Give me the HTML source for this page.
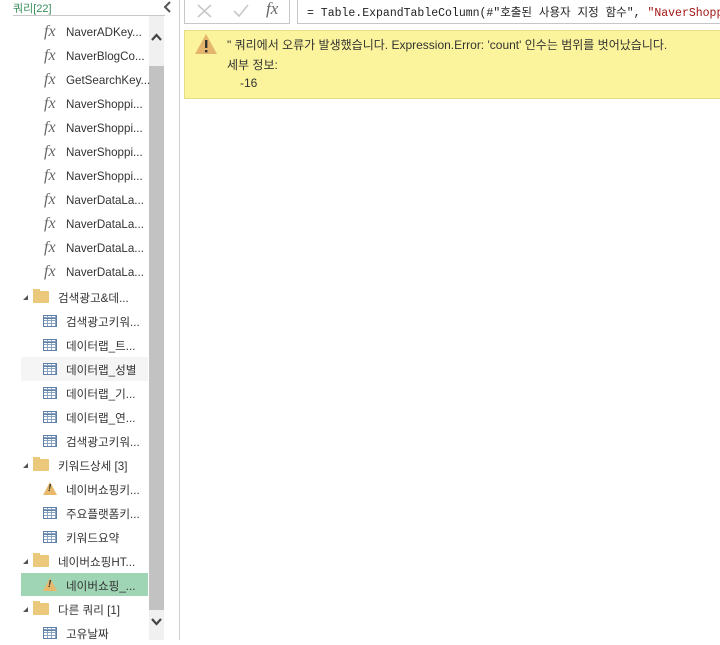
<!DOCTYPE html>
<html><head><meta charset="utf-8"><style>
*{margin:0;padding:0;box-sizing:border-box}
body{width:720px;height:640px;background:#fff;position:relative;overflow:hidden;font-family:"Segoe UI","Liberation Sans","Noto Sans CJK KR",sans-serif;font-size:12px;color:#333}
.a{position:absolute}
.row{position:absolute;left:21px;width:127px;height:24px}
.row span{position:absolute;top:5px;white-space:nowrap;font-size:11.6px;color:#333}
.fx{position:absolute;left:23px;top:2px;font-family:"Liberation Serif",serif;font-style:italic;font-size:16px;color:#666}
.tbl{position:absolute;left:22px;top:6px;width:14px;height:12px;border:1px solid #5e7fa8;background:
linear-gradient(#5e7fa8,#5e7fa8) 0 2px/100% 1px no-repeat,
repeating-linear-gradient(90deg,transparent 0 3px,#8aa3c2 3px 4px),
repeating-linear-gradient(0deg,transparent 0 2px,#8aa3c2 2px 3px);background-color:#fff}
.fold{position:absolute;left:12px;top:6px;width:16px;height:12px;background:#ecc97a;border-radius:1px}
.fold:before{content:"";position:absolute;left:0;top:-2px;width:7px;height:3px;background:#ecc97a}
.tri{position:absolute;left:2px;top:10px;width:0;height:0;border-left:5px solid transparent;border-bottom:5px solid #555}
.warn{position:absolute;left:22px;top:5px;width:0;height:0;border-left:7px solid transparent;border-right:7px solid transparent;border-bottom:13px solid #e8b96a}
.warn:after{content:"!";position:absolute;left:-2px;top:1px;font-size:10px;font-weight:bold;color:#333}
</style></head><body>
<div class="a" style="left:13px;top:0;font-size:11px;color:#3a8f5c">쿼리[22]</div>
<div class="a" style="left:13px;top:15px;width:152px;height:1px;background:#c8c8c8"></div>
<svg class="a" style="left:162px;top:0" width="12" height="14"><path d="M8 2 L3 7 L8 12" stroke="#555" stroke-width="2" fill="none"/></svg>
<div class="a" style="left:179px;top:0;width:1px;height:640px;background:#d0d0d0"></div>
<div class="a" style="left:149px;top:16px;width:15px;height:624px;background:#f0f0f0"></div>
<div class="a" style="left:149px;top:66px;width:15px;height:544px;background:#c2c2c2"></div>
<svg class="a" style="left:150px;top:32px" width="13" height="10"><path d="M2 8 L6.5 3 L11 8" stroke="#444" stroke-width="2.2" fill="none"/></svg>
<svg class="a" style="left:150px;top:617px" width="13" height="10"><path d="M2 2 L6.5 7 L11 2" stroke="#444" stroke-width="2.2" fill="none"/></svg>

<div class="row" style="top:21px"><i class="fx">fx</i><span style="left:45px">NaverADKey...</span></div>
<div class="row" style="top:45px"><i class="fx">fx</i><span style="left:45px">NaverBlogCo...</span></div>
<div class="row" style="top:69px"><i class="fx">fx</i><span style="left:45px">GetSearchKey...</span></div>
<div class="row" style="top:93px"><i class="fx">fx</i><span style="left:45px">NaverShoppi...</span></div>
<div class="row" style="top:117px"><i class="fx">fx</i><span style="left:45px">NaverShoppi...</span></div>
<div class="row" style="top:141px"><i class="fx">fx</i><span style="left:45px">NaverShoppi...</span></div>
<div class="row" style="top:165px"><i class="fx">fx</i><span style="left:45px">NaverShoppi...</span></div>
<div class="row" style="top:189px"><i class="fx">fx</i><span style="left:45px">NaverDataLa...</span></div>
<div class="row" style="top:213px"><i class="fx">fx</i><span style="left:45px">NaverDataLa...</span></div>
<div class="row" style="top:237px"><i class="fx">fx</i><span style="left:45px">NaverDataLa...</span></div>
<div class="row" style="top:261px"><i class="fx">fx</i><span style="left:45px">NaverDataLa...</span></div>
<div class="row" style="top:285px"><i class="tri"></i><i class="fold"></i><span style="left:37px">검색광고&amp;데...</span></div>
<div class="row" style="top:309px"><i class="tbl"></i><span style="left:45px">검색광고키워...</span></div>
<div class="row" style="top:333px"><i class="tbl"></i><span style="left:45px">데이터랩_트...</span></div>
<div class="row" style="top:357px;background:#f5f5f5"><i class="tbl"></i><span style="left:45px">데이터랩_성별</span></div>
<div class="row" style="top:381px"><i class="tbl"></i><span style="left:45px">데이터랩_기...</span></div>
<div class="row" style="top:405px"><i class="tbl"></i><span style="left:45px">데이터랩_연...</span></div>
<div class="row" style="top:429px"><i class="tbl"></i><span style="left:45px">검색광고키워...</span></div>
<div class="row" style="top:453px"><i class="tri"></i><i class="fold"></i><span style="left:37px">키워드상세 [3]</span></div>
<div class="row" style="top:477px"><i class="warn"></i><span style="left:45px">네이버쇼핑키...</span></div>
<div class="row" style="top:501px"><i class="tbl"></i><span style="left:45px">주요플랫폼키...</span></div>
<div class="row" style="top:525px"><i class="tbl"></i><span style="left:45px">키워드요약</span></div>
<div class="row" style="top:549px"><i class="tri"></i><i class="fold"></i><span style="left:37px">네이버쇼핑HT...</span></div>
<div class="row" style="top:573px;height:23px;background:#9fd4b4"><i class="warn"></i><span style="left:45px">네이버쇼핑_...</span></div>
<div class="row" style="top:597px"><i class="tri"></i><i class="fold"></i><span style="left:37px">다른 쿼리 [1]</span></div>
<div class="row" style="top:621px"><i class="tbl"></i><span style="left:45px">고유날짜</span></div>

<div class="a" style="left:184px;top:-1px;width:106px;height:25px;border:1px solid #c6c6c6;background:#fff"></div>
<svg class="a" style="left:196px;top:3px" width="18" height="16"><path d="M2 2 L15 14 M15 2 L2 14" stroke="#c8c8c8" stroke-width="1.6"/></svg>
<svg class="a" style="left:232px;top:3px" width="18" height="16"><path d="M2 8 L7 13 L16 2" stroke="#c8c8c8" stroke-width="1.6" fill="none"/></svg>
<div class="a" style="left:266px;top:-1px;font-family:'Liberation Serif',serif;font-style:italic;font-size:17px;color:#666">fx</div>
<div class="a" style="left:297px;top:-1px;width:430px;height:25px;border:1px solid #c6c6c6;background:#fff"></div>
<div class="a" style="left:307px;top:4px;font-family:'Liberation Mono','Noto Sans CJK KR',monospace;font-size:11.5px;color:#222;white-space:nowrap">= Table.ExpandTableColumn(#"호출된 사용자 지정 함수", <span style="color:#a31515">"NaverShopp</span></div>
<div class="a" style="left:184px;top:30px;width:540px;height:69px;background:#fbf49c;border:1px solid #e6dc8a"></div>
<svg class="a" style="left:194px;top:33px" width="24" height="22"><path d="M12 1 L23 21 L1 21 Z" fill="#e4b56c"/><rect x="11" y="7" width="2.4" height="8" fill="#333"/><rect x="11" y="17" width="2.4" height="2.4" fill="#333"/></svg>
<div class="a" style="left:227px;top:36px;font-size:12px;color:#333;white-space:nowrap">" 쿼리에서 오류가 발생했습니다. Expression.Error: 'count' 인수는 범위를 벗어났습니다.</div>
<div class="a" style="left:227px;top:56px;font-size:12px;color:#333">세부 정보:</div>
<div class="a" style="left:240px;top:76px;font-size:12px;color:#333">-16</div>
</body></html>
